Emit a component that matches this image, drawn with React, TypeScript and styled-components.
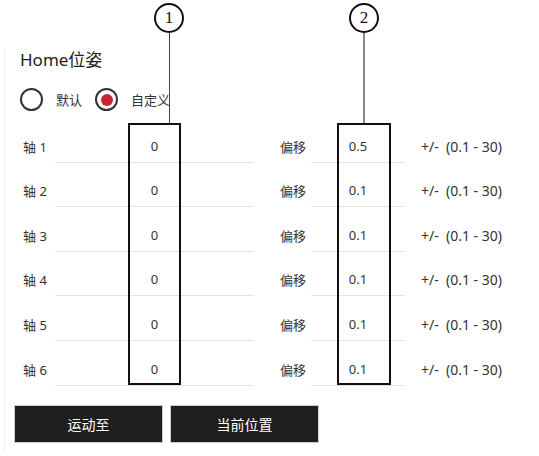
import styled, { createGlobalStyle } from "styled-components";

const GlobalStyle = createGlobalStyle`
  html, body {
    margin: 0;
    padding: 0;
    background: #ffffff;
  }
  body {
    font-family: "Noto Sans", "Noto Sans CJK SC", sans-serif;
    color: #333333;
  }
`

const axes = [
  { name: '轴 1', value: '0', offset: '0.5' },
  { name: '轴 2', value: '0', offset: '0.1' },
  { name: '轴 3', value: '0', offset: '0.1' },
  { name: '轴 4', value: '0', offset: '0.1' },
  { name: '轴 5', value: '0', offset: '0.1' },
  { name: '轴 6', value: '0', offset: '0.1' },
]

// callouts drawn over the form: numbered bubble, leader line, frame around a column
const callouts = [
  { num: '1', cx: 169, box: { left: 128, width: 53 }, line: '#444444', lineW: 1 },
  { num: '2', cx: 364, box: { left: 337, width: 54 }, line: '#888888', lineW: 2 },
]

const App = () => {
  return (
    <Page>
      <GlobalStyle />
      <Panel>
        <Title>Home位姿</Title>
        <RadioGroup>
          <RadioOption>
            <Radio />
            <RadioText>默认</RadioText>
          </RadioOption>
          <RadioOption>
            <Radio $checked />
            <RadioText>自定义</RadioText>
          </RadioOption>
        </RadioGroup>
        <Rows>
          {axes.map((a) => (
            <Row key={a.name}>
              <AxisLabel>{a.name}</AxisLabel>
              <Field $width={199}>{a.value}</Field>
              <OffsetLabel>偏移</OffsetLabel>
              <Field $width={94}>{a.offset}</Field>
              <Range>{'+/-  (0.1 - 30)'}</Range>
            </Row>
          ))}
        </Rows>
        <Buttons>
          <Button>运动至</Button>
          <Button>当前位置</Button>
        </Buttons>
      </Panel>

      {callouts.map((c) => (
        <div key={c.num}>
          <Bubble style={{ left: c.cx - 15 }}>{c.num}</Bubble>
          <Leader style={{ left: c.cx - c.lineW / 2, width: c.lineW, background: c.line }} />
          <Frame style={{ left: c.box.left, width: c.box.width }} />
        </div>
      ))}
    </Page>
  )
};

export default App

const Page = styled.div`
  position: relative;
  width: 539px;
  height: 456px;
  overflow: hidden;
  background: #ffffff;
  padding-top: 48px;
  box-sizing: border-box;
`

const Panel = styled.div`
  margin-left: 4px;
  height: 404px;
  border-left: 1px solid #efefef;
  box-sizing: border-box;
`

const Title = styled.div`
  margin-left: 15px;
  font-size: 17px;
  line-height: 24px;
  color: #222222;
`

const RadioGroup = styled.div`
  display: flex;
  align-items: center;
  gap: 13px;
  margin: 16px 0 0 15px;
  height: 23px;
`

const RadioOption = styled.label`
  display: flex;
  align-items: center;
  gap: 13px;
`

const Radio = styled.span<{ $checked?: boolean }>`
  width: 23px;
  height: 23px;
  border-radius: 50%;
  border: 2px solid #333333;
  box-sizing: border-box;
  display: flex;
  align-items: center;
  justify-content: center;
  &::after {
    content: '';
    display: ${(p) => (p.$checked ? 'block' : 'none')};
    width: 12px;
    height: 12px;
    border-radius: 50%;
    background: #c8262f;
  }
`

const RadioText = styled.span`
  font-size: 13px;
  color: #333333;
`

const Rows = styled.div`
  margin-top: 7px;
  margin-left: 18px;
`

const Row = styled.div`
  display: flex;
  align-items: flex-end;
  height: 44.6px;
  font-size: 13px;
`

const AxisLabel = styled.div`
  width: 32px;
  line-height: 32px;
  color: #333333;
`

const Field = styled.div<{ $width: number }>`
  width: ${(p) => p.$width}px;
  height: 32px;
  border-bottom: 1px solid #e4e4e4;
  display: flex;
  align-items: center;
  justify-content: center;
  color: #333333;
`

const OffsetLabel = styled.div`
  width: 31px;
  margin-left: 26px;
  line-height: 32px;
  color: #333333;
`

const Range = styled.div`
  margin-left: 16px;
  line-height: 32px;
  font-size: 14px;
  white-space: pre;
  color: #333333;
`

const Buttons = styled.div`
  display: flex;
  gap: 7px;
  margin: 19px 0 0 9px;
`

const Button = styled.button`
  width: 149px;
  height: 38px;
  background: #1f1f1f;
  border: 1px solid #cfcfcf;
  color: #ffffff;
  font-family: "Noto Sans", "Noto Sans CJK SC", sans-serif;
  font-size: 14px;
  padding: 0;
`

const Bubble = styled.div`
  position: absolute;
  top: 3px;
  width: 30px;
  height: 30px;
  border: 2px solid #111111;
  border-radius: 50%;
  box-sizing: border-box;
  background: #ffffff;
  display: flex;
  align-items: center;
  justify-content: center;
  font-family: "Liberation Serif", serif;
  font-size: 17px;
  color: #111111;
`

const Leader = styled.div`
  position: absolute;
  top: 33px;
  height: 90px;
`

const Frame = styled.div`
  position: absolute;
  top: 123px;
  height: 262px;
  border: 2px solid #111111;
  box-sizing: border-box;
`
